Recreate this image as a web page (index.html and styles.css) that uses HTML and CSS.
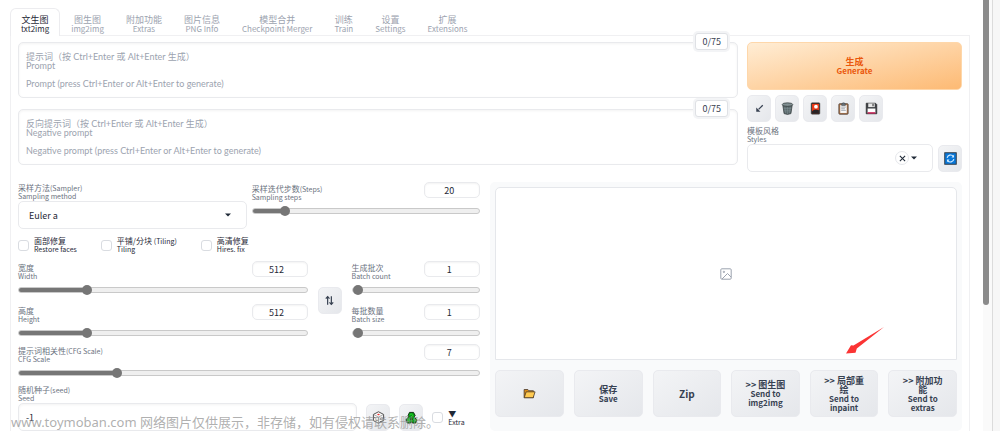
FILE: index.html
```html
<!DOCTYPE html>
<html lang="zh-CN">
<head>
<meta charset="utf-8">
<meta name="viewport" content="width=device-width, initial-scale=1">
<title>txt2img</title>
<link rel="stylesheet" href="styles.css">
</head>
<body>
<div class="page">
  <main class="main">
    <nav class="tabs" role="tablist">
      <button class="tab tab-active" role="tab" aria-selected="true">文生图<span class="en">txt2img</span></button>
      <button class="tab" role="tab">图生图<span class="en">img2img</span></button>
      <button class="tab" role="tab">附加功能<span class="en">Extras</span></button>
      <button class="tab" role="tab">图片信息<span class="en">PNG Info</span></button>
      <button class="tab" role="tab">模型合并<span class="en">Checkpoint Merger</span></button>
      <button class="tab" role="tab">训练<span class="en">Train</span></button>
      <button class="tab" role="tab">设置<span class="en">Settings</span></button>
      <button class="tab" role="tab">扩展<span class="en">Extensions</span></button>
    </nav>
    <div class="panel">
      <section class="top">
        <div class="prompts">
          <div class="prompt">
            <textarea class="prompt-text" aria-label="Prompt" placeholder="提示词（按 Ctrl+Enter 或 Alt+Enter 生成）&#10;Prompt&#10;&#10;Prompt (press Ctrl+Enter or Alt+Enter to generate)"></textarea>
            <span class="counter">0/75</span>
          </div>
          <div class="prompt">
            <textarea class="prompt-text" aria-label="Negative prompt" placeholder="反向提示词（按 Ctrl+Enter 或 Alt+Enter 生成）&#10;Negative prompt&#10;&#10;Negative prompt (press Ctrl+Enter or Alt+Enter to generate)"></textarea>
            <span class="counter">0/75</span>
          </div>
        </div>
        <div class="actions">
          <button class="generate">生成<span class="en">Generate</span></button>
          <div class="tools">
            <button class="tool" aria-label="Read parameters"><svg class="icon" viewBox="0 0 14 14"><path d="M10.500 3.500L6 8" stroke="#374151" stroke-width="1.3"/><path d="M3.500 10.500V6L8 10.500Z" fill="#374151"/></svg></button>
            <button class="tool" aria-label="Clear prompt"><svg class="icon" viewBox="0 0 14 14"><path d="M2 3.500L3.300 12.500Q7 14.200 10.700 12.500L12 3.500Z" fill="#5d6b6e" stroke="#333b3d" stroke-width=".8"/><path d="M4 5l1 7M7 5v8M10 5l-1 7M3 7h8M3.300 9.500h7.400" stroke="#839396" stroke-width=".5"/><ellipse cx="7" cy="2.800" rx="5.700" ry="1.900" fill="#829093" stroke="#333b3d" stroke-width=".8"/></svg></button>
            <button class="tool" aria-label="Show extra networks"><svg class="icon" viewBox="0 0 14 14"><rect x="2.300" y=".9" width="9.400" height="12.200" rx="1" fill="#222" stroke="#555" stroke-width=".6"/><rect x="3.300" y="2" width="7.400" height="10" fill="#ef3b18"/><circle cx="7.500" cy="5" r="2" fill="#fff"/><path d="M3.300 10Q6 6.500 10.700 9v3H3.300Z" fill="#272326"/></svg></button>
            <button class="tool" aria-label="Apply styles"><svg class="icon" viewBox="0 0 14 14"><rect x="2" y="1.800" width="10" height="11.400" rx="1" fill="#a97650" stroke="#4c3b30" stroke-width=".8"/><path d="M3.500 3.300h7v8.500h-7z" fill="#f8f8f8"/><path d="M5 2.800q0-2 2-2t2 2v1H5z" fill="#667078" stroke="#343b40" stroke-width=".5"/><path d="M4.500 5.500h5M4.500 7.300h4M4.500 9h5" stroke="#78818b" stroke-width=".7"/></svg></button>
            <button class="tool" aria-label="Save style"><svg class="icon" viewBox="0 0 14 14"><path d="M1.300 1.300h10l1.400 1.400v10H1.300z" fill="#3d4045" stroke="#222" stroke-width=".7"/><path d="M3.500 1.500h7v4h-7z" fill="#e8e8e8"/><path d="M8 2h1.300v2.700H8z" fill="#444"/><path d="M2.800 7h8.400v5H2.800z" fill="#fff"/><path d="M2.800 11h8.400v1.500H2.800z" fill="#c5164e"/></svg></button>
          </div>
          <div class="styles-row">
            <div class="field">
              <label class="label" for="styles">模板风格<span class="en">Styles</span></label>
              <div class="select-wrap">
                <select class="select" id="styles"><option></option></select>
                <button class="clear" aria-label="Clear styles"><svg class="clear-icon" viewBox="0 0 8 8"><path d="M1 1l6 6M7 1L1 7" stroke="#1f2937" stroke-width="1.200"/></svg></button>
                <svg class="caret" viewBox="0 0 6 4"><path d="M0 .5h6L3 3.500z" fill="#1f2937"/></svg>
              </div>
            </div>
            <button class="tool" aria-label="Refresh styles"><svg class="icon" viewBox="0 0 14 14"><rect x=".8" y=".8" width="12.400" height="12.400" fill="#0877d8" stroke="#303840"/><path d="M3.400 6.300A3.700 3.700 0 0 1 10 4.800M10.600 7.700A3.700 3.700 0 0 1 4 9.200" fill="none" stroke="#d5ecff" stroke-width="1.200"/><path d="M10.800 3v3H8zM3.200 11V8H6z" fill="#d5ecff"/></svg></button>
          </div>
        </div>
      </section>

      <section class="workspace">
        <form class="settings">
          <div class="pair">
            <div class="field">
              <label class="label" for="sampler">采样方法<span class="en-inline">(Sampler)</span><span class="en">Sampling method</span></label>
              <div class="select-wrap">
                <select class="select" id="sampler"><option>Euler a</option></select>
                <svg class="caret" viewBox="0 0 6 4"><path d="M0 .5h6L3 3.500z" fill="#1f2937"/></svg>
              </div>
            </div>
            <div class="slider">
              <div class="slider-head"><label class="label" for="steps">采样迭代步数<span class="en-inline">(Steps)</span><span class="en">Sampling steps</span></label><input class="number" type="number" value="20" aria-label="Sampling steps value"></div>
              <input class="range" id="steps" type="range" min="1" max="150" value="20" style="--fill:13%">
            </div>
          </div>
          <div class="checks">
            <label class="check"><input class="box" type="checkbox"><span>面部修复<span class="en">Restore faces</span></span></label>
            <label class="check"><input class="box" type="checkbox"><span>平铺/分块 <span class="en-inline">(Tiling)</span><span class="en">Tiling</span></span></label>
            <label class="check"><input class="box" type="checkbox"><span>高清修复<span class="en">Hires. fix</span></span></label>
          </div>
          <div class="dimensions">
            <div class="stack">
              <div class="slider">
                <div class="slider-head"><label class="label" for="width">宽度<span class="en">Width</span></label><input class="number" type="number" value="512" aria-label="Width value"></div>
                <input class="range" id="width" type="range" min="64" max="2048" value="512" style="--fill:23%">
              </div>
              <div class="slider">
                <div class="slider-head"><label class="label" for="height">高度<span class="en">Height</span></label><input class="number" type="number" value="512" aria-label="Height value"></div>
                <input class="range" id="height" type="range" min="64" max="2048" value="512" style="--fill:23%">
              </div>
            </div>
            <button class="tool" type="button" aria-label="Swap width and height"><svg class="icon" viewBox="0 0 14 14"><path d="M5 11.500V3M9 2.500V11" stroke="#374151" stroke-width="1.300"/><path d="M3 5L5 2.800 7 5M7 9L9 11.200 11 9" fill="none" stroke="#374151" stroke-width="1.300"/></svg></button>
            <div class="stack">
              <div class="slider">
                <div class="slider-head"><label class="label" for="count">生成批次<span class="en">Batch count</span></label><input class="number" type="number" value="1" aria-label="Batch count value"></div>
                <input class="range" id="count" type="range" min="1" max="100" value="1" style="--fill:0%">
              </div>
              <div class="slider">
                <div class="slider-head"><label class="label" for="size">每批数量<span class="en">Batch size</span></label><input class="number" type="number" value="1" aria-label="Batch size value"></div>
                <input class="range" id="size" type="range" min="1" max="8" value="1" style="--fill:0%">
              </div>
            </div>
          </div>
          <div class="slider slider-cfg">
            <div class="slider-head"><label class="label" for="cfg">提示词相关性<span class="en-inline">(CFG Scale)</span><span class="en">CFG Scale</span></label><input class="number" type="number" value="7" aria-label="CFG Scale value"></div>
            <input class="range" id="cfg" type="range" min="1" max="30" value="7" style="--fill:21%">
          </div>
          <div class="seed-row">
            <div class="field">
              <label class="label" for="seed">随机种子<span class="en-inline">(seed)</span><span class="en">Seed</span></label>
              <input class="seed" id="seed" type="text" value="-1">
            </div>
            <button class="tool" type="button" aria-label="Random seed"><svg class="icon" viewBox="0 0 14 14"><path d="M7 .8l5.500 2.900v6.600L7 13.200l-5.500-2.900V3.700z" fill="#f7f7f7" stroke="#333" stroke-width=".9"/><path d="M1.500 3.700L7 6.500l5.500-2.800M7 6.500v6.700" fill="none" stroke="#777" stroke-width=".6"/><ellipse cx="7" cy="3.700" rx="1.300" ry=".8" fill="#e33"/><path d="M3 6.500v1.200M5.300 9.500v1.200M9 8v1.200M11 7v1.200M9 11v.8M11 9.500v.8" stroke="#333"/></svg></button>
            <button class="tool" type="button" aria-label="Reuse seed"><svg class="icon" viewBox="0 0 14 14"><path d="M4.800 1.500h4.400L11 5 9.500 6.500l3.500 3-1.500 3.500H8L7 11.500 6 13H2.500L1 9.500l3-3.300L3.300 5z" fill="#0a9b16" stroke="#062b08"/><path d="M5 4l2-1 2 3M3.500 8L5 10H2.800M8 10l2-2 1.500 2.500" fill="none" stroke="#20d82b"/><path d="M7 6.500L5.300 9.300h3.400z" fill="#072f0a"/></svg></button>
            <label class="check check-extra"><input class="box" type="checkbox"><span>▼<span class="en">Extra</span></span></label>
          </div>
        </form>

        <div class="output">
          <div class="gallery">
            <svg class="placeholder" viewBox="0 0 12 12" fill="none" stroke="#9ca3af"><rect x=".8" y=".8" width="10.400" height="10.400" rx="1"/><circle cx="3.900" cy="3.900" r=".7"/><path d="M2 11l5.500-5.500L11 9"/></svg>
            <svg class="arrow" viewBox="0 0 38 27"><path d="M38 0L10.800 21.500 9.500 25.800 0 26.500 5 18.300 7.500 18.500z" fill="#fb3434"/></svg>
          </div>
          <div class="sends">
            <button class="send" aria-label="Open folder"><svg class="icon" viewBox="0 0 14 14"><path d="M1.200 11.500V2.700h4l1 1.300h5v7.500z" fill="#d98a16" stroke="#403126" stroke-width=".8"/><path d="M1.300 11.500L3.400 5.200H13l-2 6.300z" fill="#ffca50" stroke="#403126" stroke-width=".8"/></svg></button>
            <button class="send">保存<span class="en">Save</span></button>
            <button class="send send-zip">Zip</button>
            <button class="send">&gt;&gt; 图生图<span class="en">Send to img2img</span></button>
            <button class="send">&gt;&gt; 局部重绘<span class="en">Send to inpaint</span></button>
            <button class="send">&gt;&gt; 附加功能<span class="en">Send to extras</span></button>
          </div>
        </div>
      </section>
    </div>
  </main>
  <div class="scroll"><div class="thumb"></div></div>
  <div class="edge"></div>
  <p class="watermark">www.toymoban.com 网络图片仅供展示，非存储，如有侵权请联系删除。</p>
</div>
</body>
</html>
```
FILE: styles.css
```css
* { box-sizing: border-box; }
body {
  margin: 0;
  background: #fff;
  color: #1f2937;
  font: 9px/9px "Noto Sans CJK SC", sans-serif;
}
button, input, select, textarea { font: inherit; color: inherit; margin: 0; }
button { cursor: pointer; }
.en { display: block; font-size: 8px; }
.label .en, .check .en, .en-inline { font-size: 7px; }
.en-inline { line-height: 0; }
.page { position: relative; display: flex; height: 100vh; overflow: hidden; }
.main { flex: 1; min-width: 0; padding: 8px 13px 0 10px; }

.tabs { display: flex; }
.tab {
  height: 28px;
  padding: 3px 10px 0;
  margin-bottom: -1px;
  border: 1px solid transparent;
  border-bottom: 0;
  background: none;
  color: #9ca3af;
  white-space: nowrap;
}
.tab-active {
  position: relative;
  background: #fff;
  border-color: #ececef;
  border-radius: 6px 6px 0 0;
  color: #1f2937;
}
.panel { border: 1px solid #f0f0f2; padding: 6px 7px 0; height: 1000px; }

.top { display: grid; grid-template-columns: 144fr 43fr; column-gap: 9px; }
.prompts { display: flex; flex-direction: column; gap: 11px; }
.prompt { position: relative; display: flex; }
.prompt-text {
  flex: 1;
  height: 56px;
  padding: 9px 7px;
  border: 1px solid #e9eaed;
  border-radius: 5px;
  box-shadow: inset 0 1px 3px #0000000d;
  font-family: Lato, "Noto Sans CJK SC", sans-serif;
  resize: none;
  outline: 0;
}
.prompt-text::placeholder { color: #9ca3af; }
.counter {
  position: absolute;
  top: -9px;
  right: 10px;
  padding: 2px 6px;
  border: 1px solid #dfe1e5;
  border-radius: 3px;
  background: #fff;
  box-shadow: 0 0 0 2px #f3f4f6;
  color: #374151;
  line-height: 11px;
}
.generate {
  display: block;
  width: 100%;
  height: 48px;
  border: 1px solid #fed7aa;
  border-radius: 5px;
  background: linear-gradient(to bottom right, #ffedd5, #fdba74);
  color: #ea580c;
  font-weight: 700;
}
.tools { display: flex; gap: 4px; margin-top: 5px; }
.tool {
  display: flex;
  align-items: center;
  justify-content: center;
  flex: none;
  width: 24px;
  height: 27px;
  padding: 0;
  border: 1px solid #e9eaee;
  border-radius: 5px;
  background: linear-gradient(to bottom right, #f3f4f6, #e5e7eb);
}
.icon { width: 13px; height: 13px; }
.styles-row { display: flex; align-items: flex-end; gap: 5px; margin-top: 4px; }
.field { flex: 1; min-width: 0; }
.label { display: block; color: #6b7280; font-size: 8px; line-height: 9px; white-space: nowrap; }
.select-wrap { position: relative; }
.select {
  display: block;
  appearance: none;
  width: 100%;
  height: 28px;
  padding: 0 10px;
  border: 1px solid #e9eaed;
  border-radius: 5px;
  background: #fff;
}
.caret { position: absolute; right: 16px; top: 12px; width: 6px; height: 4px; }
.clear {
  position: absolute;
  right: 24px;
  top: 7px;
  width: 14px;
  height: 14px;
  padding: 0;
  border: 1px solid #e5e7eb;
  border-radius: 50%;
  background: #fff;
  display: grid;
  place-items: center;
}
.clear-icon { width: 7px; height: 7px; }

.workspace { display: grid; grid-template-columns: 49fr 50fr; column-gap: 10px; margin-top: 10px; align-items: start; }
.pair { display: grid; grid-template-columns: 1fr 1fr; gap: 5px; }
.pair .field { padding-top: 1px; }
.slider-head { display: flex; justify-content: space-between; height: 23px; }
.slider-head .label { padding-top: 2px; }
.number {
  appearance: textfield;
  width: 56px;
  height: 16px;
  padding: 0 12px 0 6px;
  border: 1px solid #e9eaed;
  border-radius: 5px;
  box-shadow: inset 0 1px 2px #0000000d;
  text-align: center;
}
.number::-webkit-inner-spin-button { appearance: none; margin: 0; }
.range { display: block; appearance: none; width: 100%; height: 12px; background: none; }
.range::-webkit-slider-runnable-track {
  height: 6px;
  border: 1px solid #c9c9c9;
  border-radius: 3px;
  background: linear-gradient(to right, #767676 var(--fill), #efefef var(--fill));
}
.range::-webkit-slider-thumb {
  appearance: none;
  width: 10px;
  height: 10px;
  margin-top: -3px;
  border-radius: 50%;
  background: #767676;
}
.checks { display: flex; gap: 24px; margin-top: 7px; }
.check { display: flex; align-items: center; gap: 5px; font-size: 8px; line-height: 9px; white-space: nowrap; }
.box {
  appearance: none;
  flex: none;
  width: 11px;
  height: 11px;
  border: 1px solid #d9dce1;
  border-radius: 3px;
  background: #fff;
}
.dimensions { display: grid; grid-template-columns: 9fr 24px 4fr; column-gap: 10px; align-items: center; margin-top: 7px; }
.stack { display: flex; flex-direction: column; gap: 8px; }
.slider-cfg { margin-top: 5px; }
.seed-row { display: flex; align-items: flex-end; gap: 9px; margin-top: 6px; }
.seed {
  display: block;
  width: 100%;
  height: 28px;
  padding: 0 7px;
  border: 1px solid #e9eaed;
  border-radius: 5px;
  box-shadow: inset 0 1px 3px #0000000d;
}
.check-extra { height: 27px; width: 48px; }

.output { background: #f9fafb; border-radius: 5px; padding: 5px 5px 14px; }
.gallery {
  position: relative;
  display: grid;
  place-items: center;
  height: 173px;
  border: 1px solid #e5e7eb;
  border-radius: 5px 5px 0 0;
  background: #fff;
}
.placeholder { width: 12px; height: 12px; }
.arrow { position: absolute; right: 72px; bottom: 5px; width: 38px; height: 27px; }
.sends { display: grid; grid-template-columns: repeat(6, 1fr); gap: 10px; margin-top: 10px; }
.send {
  display: grid;
  place-content: center;
  justify-items: center;
  height: 47px;
  padding: 0 12px;
  border: 1px solid #e9eaee;
  border-radius: 5px;
  background: linear-gradient(to bottom right, #f3f4f6, #e5e7eb);
  color: #374151;
  font-weight: 700;
}
.send-zip { font-size: 10px; }

.scroll { flex: none; width: 9px; background: #fafafa; }
.thumb { width: 6px; height: 305px; background: #8b8b8b; border-radius: 0 0 3px 3px; }
.edge { flex: none; width: 8px; background: #f7f7f7; border-left: 1px solid #dcdcdc; }
.watermark {
  position: absolute;
  left: 11px;
  bottom: 0;
  margin: 0;
  color: #9b9b9bcc;
  font: 13px/17px "Noto Sans", "Noto Sans CJK SC", sans-serif;
  white-space: nowrap;
}
```
